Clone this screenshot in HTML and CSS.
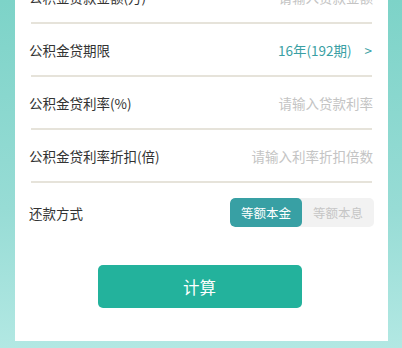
FILE: index.html
```html
<!DOCTYPE html>
<html lang="zh">
<head>
<meta charset="utf-8">
<link rel="stylesheet" href="styles.css">
</head>
<body>
<div class="page">
  <div class="card">
    <div class="row">
      <span class="label">公积金贷款金额(万)</span>
      <span class="placeholder">请输入贷款金额</span>
    </div>
    <div class="divider"></div>
    <div class="row">
      <span class="label">公积金贷期限</span>
      <span class="value">16年(192期)<span class="chev">&gt;</span></span>
    </div>
    <div class="divider"></div>
    <div class="row">
      <span class="label">公积金贷利率(%)</span>
      <span class="placeholder">请输入贷款利率</span>
    </div>
    <div class="divider"></div>
    <div class="row">
      <span class="label">公积金贷利率折扣(倍)</span>
      <span class="placeholder">请输入利率折扣倍数</span>
    </div>
    <div class="divider"></div>
    <div class="row row-last">
      <span class="label">还款方式</span>
      <div class="toggle">
        <span class="opt active">等额本金</span>
        <span class="opt">等额本息</span>
      </div>
    </div>
    <div class="actions">
      <button class="calc">计算</button>
    </div>
  </div>
</div>
</body>
</html>
```
FILE: styles.css
```css
html, body {
  margin: 0;
  padding: 0;
}
body {
  width: 402px;
  height: 348px;
  overflow: hidden;
  background: linear-gradient(180deg, #7dd3c8 0%, #97dcd5 60%, #b2e8e3 100%);
  font-family: "Noto Sans CJK SC", "Noto Sans", sans-serif;
}
.page {
  padding: 0 14px 0 15px;
  margin-top: -29px;
}
.card {
  background: #ffffff;
  padding: 0 15px 33px 14px;
}
.row {
  height: 51px;
  display: flex;
  align-items: center;
  justify-content: space-between;
  font-size: 13.5px;
}
.row-last {
  height: 59px;
}
.label {
  color: #333333;
}
.placeholder {
  color: #c4c4c4;
}
.value {
  color: #3a9fa4;
  display: flex;
  align-items: center;
}
.chev {
  margin-left: 13px;
  margin-right: 1px;
}
.divider {
  height: 2px;
  background: #e6e3da;
  margin: 0 1px 0 2px;
}
.toggle {
  display: flex;
  height: 29px;
  border-radius: 5px;
  overflow: hidden;
  background: #f2f2f2;
  margin-right: -1px;
}
.opt {
  width: 72px;
  display: flex;
  align-items: center;
  justify-content: center;
  font-size: 12.5px;
  color: #c6c6c6;
}
.opt.active {
  background: #38a0a4;
  color: #ffffff;
  border-radius: 5px;
}
.actions {
  display: flex;
  justify-content: center;
  padding-top: 23px;
  padding-right: 3px;
}
.calc {
  width: 204px;
  height: 43px;
  border: none;
  border-radius: 5px;
  background: #23b29c;
  color: #ffffff;
  font-family: "Noto Sans CJK SC", "Noto Sans", sans-serif;
  font-size: 16.5px;
  padding: 0;
}
```
